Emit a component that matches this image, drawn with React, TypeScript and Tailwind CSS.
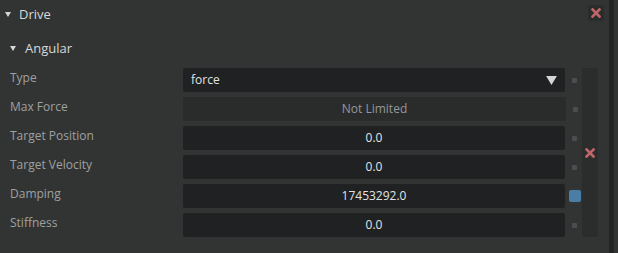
import React from 'react';

const font = { fontFamily: '"Open Sans", "Noto Sans", sans-serif' };

const Cross = ({ className }: { className?: string }) => (
  <svg viewBox="0 0 10 10" className={className}>
    <path d="M1.5 1.5 L8.5 8.5 M8.5 1.5 L1.5 8.5" stroke="#c0666a" strokeWidth="2.6" strokeLinecap="square" />
  </svg>
);

const Caret = ({ className }: { className?: string }) => (
  <svg viewBox="0 0 6 5" className={className}>
    <path d="M0 0 L6 0 L3 5 Z" fill="#d4d6d6" />
  </svg>
);

type Row = { label: string; value: string; kind?: 'select' | 'disabled'; active?: boolean };

const rows: Row[] = [
  { label: 'Type', value: 'force', kind: 'select' },
  { label: 'Max Force', value: 'Not Limited', kind: 'disabled' },
  { label: 'Target Position', value: '0.0' },
  { label: 'Target Velocity', value: '0.0' },
  { label: 'Damping', value: '17453292.0', active: true },
  { label: 'Stiffness', value: '0.0' },
];

export default function App() {
  return (
    <div className="w-[618px] h-[253px] bg-[#323433] flex overflow-hidden text-[12px]" style={font}>
      <div className="flex-1 flex flex-col">
        {/* Drive header */}
        <div className="h-[29px] flex items-center pl-[5px] pr-[5px]">
          <Caret className="w-[6px] h-[5px] mr-[8px]" />
          <span className="text-[13px] text-[#d6d8d8] flex-1 leading-none">Drive</span>
          <div className="w-[16px] h-[16px] rounded-[2px] bg-[#2a2c2c] flex items-center justify-center -mt-[3px]">
            <Cross className="w-[10px] h-[10px]" />
          </div>
        </div>

        {/* Angular subheader */}
        <div className="h-[39px] flex items-center pl-[10px]">
          <Caret className="w-[6px] h-[5px] mr-[9px]" />
          <span className="text-[13px] text-[#d6d8d8] leading-none">Angular</span>
        </div>

        <div className="flex">
          <div className="flex flex-col gap-[5px]">
            {rows.map((r) => (
              <div key={r.label} className="h-[24px] flex items-center">
                <div className="w-[183px] pl-[10px] text-[#9ea1a1] -mt-[5px]">{r.label}</div>
                {r.kind === 'select' ? (
                  <div className="w-[382px] h-[24px] rounded-[2px] bg-[#202122] flex items-center pl-[8px] pr-[8px] text-[#e2e4e4]">
                    <span className="flex-1">{r.value}</span>
                    <Caret className="w-[11px] h-[9px]" />
                  </div>
                ) : r.kind === 'disabled' ? (
                  <div className="w-[383px] h-[24px] rounded-[2px] bg-[#2a2c2c] flex items-center justify-center text-[#95989a]">
                    {r.value}
                  </div>
                ) : (
                  <div className="w-[382px] h-[24px] rounded-[2px] bg-[#202122] flex items-center justify-center text-[#e2e4e4]">
                    {r.value}
                  </div>
                )}
                <div className="w-[16px] flex items-center justify-center">
                  {r.active ? (
                    <div className="w-[12px] h-[12px] rounded-[2px] bg-[#4b7ea6] ml-[4px]" />
                  ) : (
                    <div className="w-[5px] h-[5px] rounded-[1px] bg-[#4b4d4e] ml-[3px]" />
                  )}
                </div>
              </div>
            ))}
          </div>
          <div className="w-[16px] h-[169px] rounded-[2px] bg-[#2b2d2d] flex items-center justify-center">
            <Cross className="w-[10px] h-[10px]" />
          </div>
        </div>
      </div>
      <div className="w-[5px] bg-[#232425]" />
      <div className="w-[4px]" />
    </div>
  );
}
